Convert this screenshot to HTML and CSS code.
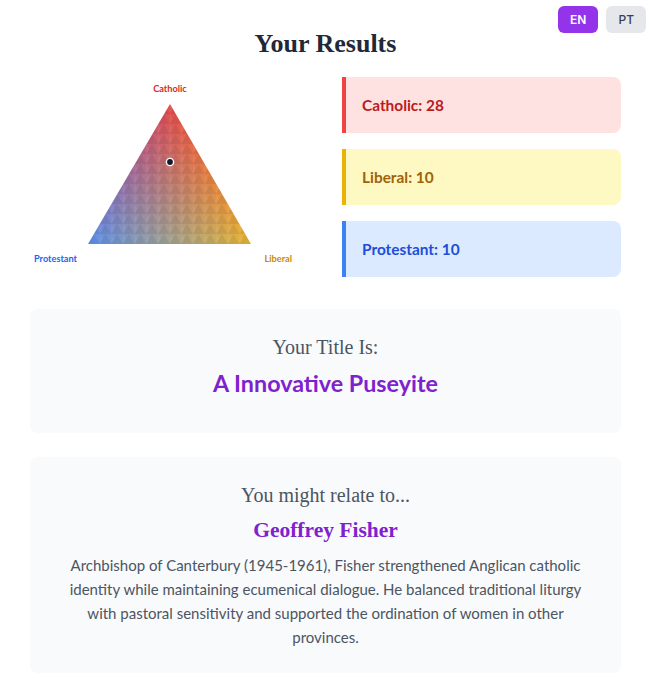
FILE: index.html
```html
<!DOCTYPE html>
<html lang="en">
<head>
<meta charset="utf-8">
<title>Your Results</title>
<link rel="stylesheet" href="styles.css">
</head>
<body>
<div class="lang-switch">
  <button class="lang-btn lang-btn-active">EN</button>
  <button class="lang-btn">PT</button>
</div>
<main class="container">
  <h1 class="page-title">Your Results</h1>
  <section class="results-grid">
    <div class="chart">
      <svg class="ternary" width="280" height="200" viewBox="0 0 280 200">
        <defs>
          <clipPath id="triClip">
            <polygon points="140,27 58,167 221,167"/>
          </clipPath>
          <linearGradient id="gRed" gradientUnits="userSpaceOnUse" x1="140" y1="27" x2="140" y2="167">
            <stop offset="0" stop-color="rgb(226,56,60)"/>
            <stop offset="1" stop-color="#000"/>
          </linearGradient>
          <linearGradient id="gBlue" gradientUnits="userSpaceOnUse" x1="58" y1="167" x2="180.5" y2="97">
            <stop offset="0" stop-color="rgb(78,136,236)"/>
            <stop offset="1" stop-color="#000"/>
          </linearGradient>
          <linearGradient id="gYellow" gradientUnits="userSpaceOnUse" x1="221" y1="167" x2="99.5" y2="97">
            <stop offset="0" stop-color="rgb(230,176,34)"/>
            <stop offset="1" stop-color="#000"/>
          </linearGradient>
          <pattern id="texture" patternUnits="userSpaceOnUse" x="58" y="27" width="11.65" height="10">
            <polygon points="0,10 5.82,0 11.65,10" fill="#000" fill-opacity="0.07"/>
            <polygon points="0,0 2.9,5 0,10" fill="#fff" fill-opacity="0.06"/>
          </pattern>
        </defs>
        <g clip-path="url(#triClip)">
          <g class="tri-group">
            <rect x="50" y="20" width="180" height="155" fill="url(#gRed)"/>
            <rect class="tri-add" x="50" y="20" width="180" height="155" fill="url(#gBlue)"/>
            <rect class="tri-add" x="50" y="20" width="180" height="155" fill="url(#gYellow)"/>
          </g>
          <rect x="50" y="20" width="180" height="155" fill="url(#texture)"/>
        </g>
        <circle cx="140" cy="85" r="3.6" fill="#111827" stroke="#fff" stroke-width="1.4"/>
        <text class="axis-label label-catholic" x="140" y="15" text-anchor="middle">Catholic</text>
        <text class="axis-label label-protestant" x="4" y="185">Protestant</text>
        <text class="axis-label label-liberal" x="262" y="185" text-anchor="end">Liberal</text>
      </svg>
    </div>
    <div class="scores">
      <div class="score score-catholic">Catholic: 28</div>
      <div class="score score-liberal">Liberal: 10</div>
      <div class="score score-protestant">Protestant: 10</div>
    </div>
  </section>
  <section class="card title-card">
    <h2 class="card-heading">Your Title Is:</h2>
    <p class="title-value">A Innovative Puseyite</p>
  </section>
  <section class="card relate-card">
    <h2 class="card-heading">You might relate to...</h2>
    <h3 class="figure-name">Geoffrey Fisher</h3>
    <p class="figure-desc">Archbishop of Canterbury (1945-1961), Fisher strengthened Anglican catholic identity while maintaining ecumenical dialogue. He balanced traditional liturgy with pastoral sensitivity and supported the ordination of women in other provinces.</p>
  </section>
</main>
</body>
</html>
```
FILE: styles.css
```css
* { box-sizing: border-box; }
html, body { margin: 0; padding: 0; background: #fff; }
body { font-family: Lato, "Liberation Sans", sans-serif; color: #1f2937; }

.lang-switch {
  position: absolute;
  top: 6px;
  right: 3px;
  display: flex;
  gap: 8px;
}
.lang-btn {
  border: 0;
  border-radius: 6px;
  height: 27px;
  padding: 0 12px;
  font-family: Inter, "Liberation Sans", sans-serif;
  font-size: 12px;
  font-weight: 500;
  background: #e5e7eb;
  color: #374151;
}
.lang-btn-active {
  background: #9333ea;
  color: #fff;
  font-weight: 600;
}

.container {
  padding: 28px 28px 24px 30px;
}
.page-title {
  margin: 0 0 17px;
  text-align: center;
  font-family: "Liberation Serif", serif;
  font-weight: 700;
  font-size: 26px;
  line-height: 32px;
  color: #1f2937;
}

.results-grid {
  display: grid;
  grid-template-columns: 1fr 1fr;
  gap: 32px;
  align-items: center;
}
.chart { display: flex; justify-content: center; }
.ternary { display: block; }
.tri-group { isolation: isolate; opacity: 0.9; }
.tri-add { mix-blend-mode: plus-lighter; }
.axis-label { font-family: Lato, sans-serif; font-weight: 700; font-size: 9.2px; }
.label-catholic { fill: #dc2626; }
.label-protestant { fill: #2563eb; }
.label-liberal { fill: #ca8a04; }

.scores { display: flex; flex-direction: column; gap: 16px; }
.score {
  height: 56px;
  display: flex;
  align-items: center;
  padding-left: 16px;
  border-left: 4px solid;
  border-radius: 0 8px 8px 0;
  font-weight: 700;
  font-size: 15.4px;
}
.score-catholic { background: #fee2e2; border-color: #ef4444; color: #b91c1c; }
.score-liberal { background: #fef9c3; border-color: #eab308; color: #a16207; }
.score-protestant { background: #dbeafe; border-color: #3b82f6; color: #1d4ed8; }

.card {
  background: #f9fafb;
  border-radius: 8px;
  padding: 24px;
  text-align: center;
}
.title-card { margin-top: 32px; height: 124px; }
.relate-card { margin-top: 24px; }
.card-heading {
  margin: 0;
  font-family: "Liberation Serif", serif;
  font-weight: 400;
  font-size: 20px;
  line-height: 28px;
  color: #4b5563;
}
.title-value {
  margin: 6px 0 0;
  font-weight: 700;
  font-size: 23.3px;
  line-height: 32px;
  color: #7e22ce;
}
.figure-name {
  margin: 7px 0 0;
  font-family: "Liberation Serif", serif;
  font-weight: 700;
  font-size: 21.5px;
  line-height: 28px;
  color: #7e22ce;
}
.figure-desc {
  margin: 9px 0 0;
  font-size: 15px;
  line-height: 24px;
  color: #4b5563;
}
```
